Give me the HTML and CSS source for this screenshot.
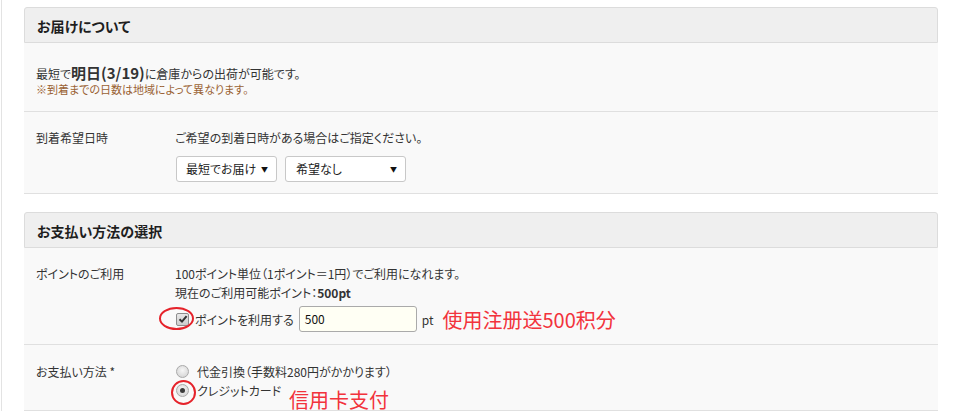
FILE: index.html
```html
<!DOCTYPE html>
<html lang="ja">
<head>
    <meta charset="UTF-8">
    <title>ご注文手続き</title>
    <link rel="stylesheet" href="styles.css">
</head>
<body>
    <div class="page">
        <section class="panel">
            <h2 class="panel-head">お届けについて</h2>
            <div class="row row-note">
                <p class="lead">最短で<strong>明日(3/19)</strong>に倉庫からの出荷が可能です。</p>
                <p class="note">※到着までの日数は地域によって異なります。</p>
            </div>
            <div class="row row-date">
                <div class="row-label">到着希望日時</div>
                <div class="row-body">
                    <p class="line">ご希望の到着日時がある場合はご指定ください。</p>
                    <div class="selects">
                        <span class="select select-short">最短でお届け</span>
                        <span class="select select-time">希望なし</span>
                    </div>
                </div>
            </div>
        </section>

        <section class="panel">
            <h2 class="panel-head">お支払い方法の選択</h2>
            <div class="row row-points">
                <div class="row-label">ポイントのご利用</div>
                <div class="row-body">
                    <p class="line">100ポイント単位（1ポイント＝1円）でご利用になれます。</p>
                    <p class="line">現在のご利用可能ポイント：<strong>500pt</strong></p>
                    <div class="point-use">
                        <span class="check">
                            <svg width="10" height="10" viewBox="0 0 10 10"><path d="M1.5 5.2 L4 7.6 L8.6 2.2" fill="none" stroke="#333" stroke-width="2"/></svg>
                        </span>
                        <span class="point-label">ポイントを利用する</span>
                        <span class="point-input">500</span>
                        <span class="unit">pt</span>
                        <span class="memo memo-points">使用注册送500积分</span>
                    </div>
                </div>
                <span class="ring ring-check"></span>
            </div>
            <div class="row row-pay">
                <div class="row-label">お支払い方法 *</div>
                <div class="row-body">
                    <div class="option"><span class="radio"></span>代金引換（手数料280円がかかります）</div>
                    <div class="option"><span class="radio is-on"></span>クレジットカード</div>
                </div>
                <span class="ring ring-radio"></span>
                <span class="memo memo-card">信用卡支付</span>
            </div>
        </section>
    </div>
</body>
</html>
```

FILE: styles.css
```css
body {
    margin: 0;
    background: #fff;
    font-family: "Noto Sans CJK JP", sans-serif;
    font-feature-settings: "palt";
    font-size: 12px;
    color: #333;
}

p {
    margin: 0;
}

.page {
    margin-left: 1px;
    border-left: 1px solid #e3e3e3;
    padding: 7px 16px 0 22px;
}

.panel {
    margin-bottom: 18px;
}

.panel-head {
    margin: 0;
    height: 34px;
    padding: 0 12px;
    border: 1px solid #dcdcdc;
    border-radius: 3px 3px 0 0;
    background: #efefef;
    font-size: 14px;
    font-weight: bold;
    line-height: 36px;
    color: #1e1e1e;
}

.row {
    position: relative;
    display: grid;
    grid-template-columns: 139px 1fr;
    box-sizing: border-box;
    padding: 0 12px;
    background: #f9f9f9;
    border-bottom: 1px solid #e0e0e0;
}

.row-label {
    line-height: 19px;
}

.row-note {
    display: block;
    height: 69px;
    padding-top: 21px;
}

.lead {
    line-height: 17px;
}

.lead strong {
    font-size: 15px;
}

.note {
    line-height: 14px;
    font-size: 11px;
    color: #9a6233;
}

.row-date {
    height: 82px;
    padding-top: 16px;
}

.line {
    line-height: 19px;
}

.selects {
    display: flex;
    gap: 8px;
    margin-top: 9px;
    margin-left: 1px;
}

.select {
    position: relative;
    height: 24px;
    line-height: 24px;
    padding-left: 9px;
    border: 1px solid #c8c8c8;
    border-radius: 3px;
    background: #fff;
    color: #222;
}

.select::after {
    content: "▼";
    position: absolute;
    right: 8px;
    top: 0;
    font-size: 7px;
    color: #111;
}

.select-short {
    width: 90px;
}

.select-time {
    width: 109px;
    padding-left: 10px;
}

.row-points {
    height: 97px;
    padding-top: 16px;
}

.point-use {
    display: flex;
    align-items: center;
    margin-top: 4px;
    height: 26px;
}

.check {
    width: 11px;
    height: 11px;
    margin-left: 1px;
    border: 1px solid #8d8d8d;
    border-radius: 2px;
    background: linear-gradient(#e8e8e8, #cdcdcd);
    display: flex;
    align-items: center;
    justify-content: center;
}

.point-label {
    margin-left: 6px;
}

.point-input {
    width: 111px;
    height: 24px;
    line-height: 24px;
    margin-left: 5px;
    padding-left: 5px;
    border: 1px solid #aaa;
    border-radius: 3px;
    background: #fffff4;
    color: #111;
}

.unit {
    margin-left: 5px;
}

.memo {
    font-family: "Noto Sans CJK SC", sans-serif;
    font-size: 20px;
    color: #f2333c;
}

.memo-points {
    margin-left: 9px;
    margin-top: 1px;
}

.row-pay {
    height: 66px;
    padding-top: 17px;
}

.option {
    display: flex;
    align-items: center;
    height: 19px;
}

.radio {
    width: 11px;
    height: 11px;
    margin: 0 8px 0 1px;
    border: 1px solid #a9a9a9;
    border-radius: 50%;
    background: radial-gradient(circle at 50% 40%, #f6f6f6, #cfcfcf);
    display: flex;
    align-items: center;
    justify-content: center;
}

.radio.is-on::after {
    content: "";
    width: 5px;
    height: 5px;
    border-radius: 50%;
    background: #3a3a3a;
}

.ring {
    position: absolute;
    border: 2px solid #e5232b;
    border-radius: 50%;
    box-sizing: border-box;
}

.ring-check {
    left: 135px;
    top: 59px;
    width: 35px;
    height: 23px;
}

.ring-radio {
    left: 147px;
    top: 35px;
    width: 25px;
    height: 25px;
}

.memo-card {
    position: absolute;
    left: 265px;
    top: 44px;
    line-height: 22px;
}
```
